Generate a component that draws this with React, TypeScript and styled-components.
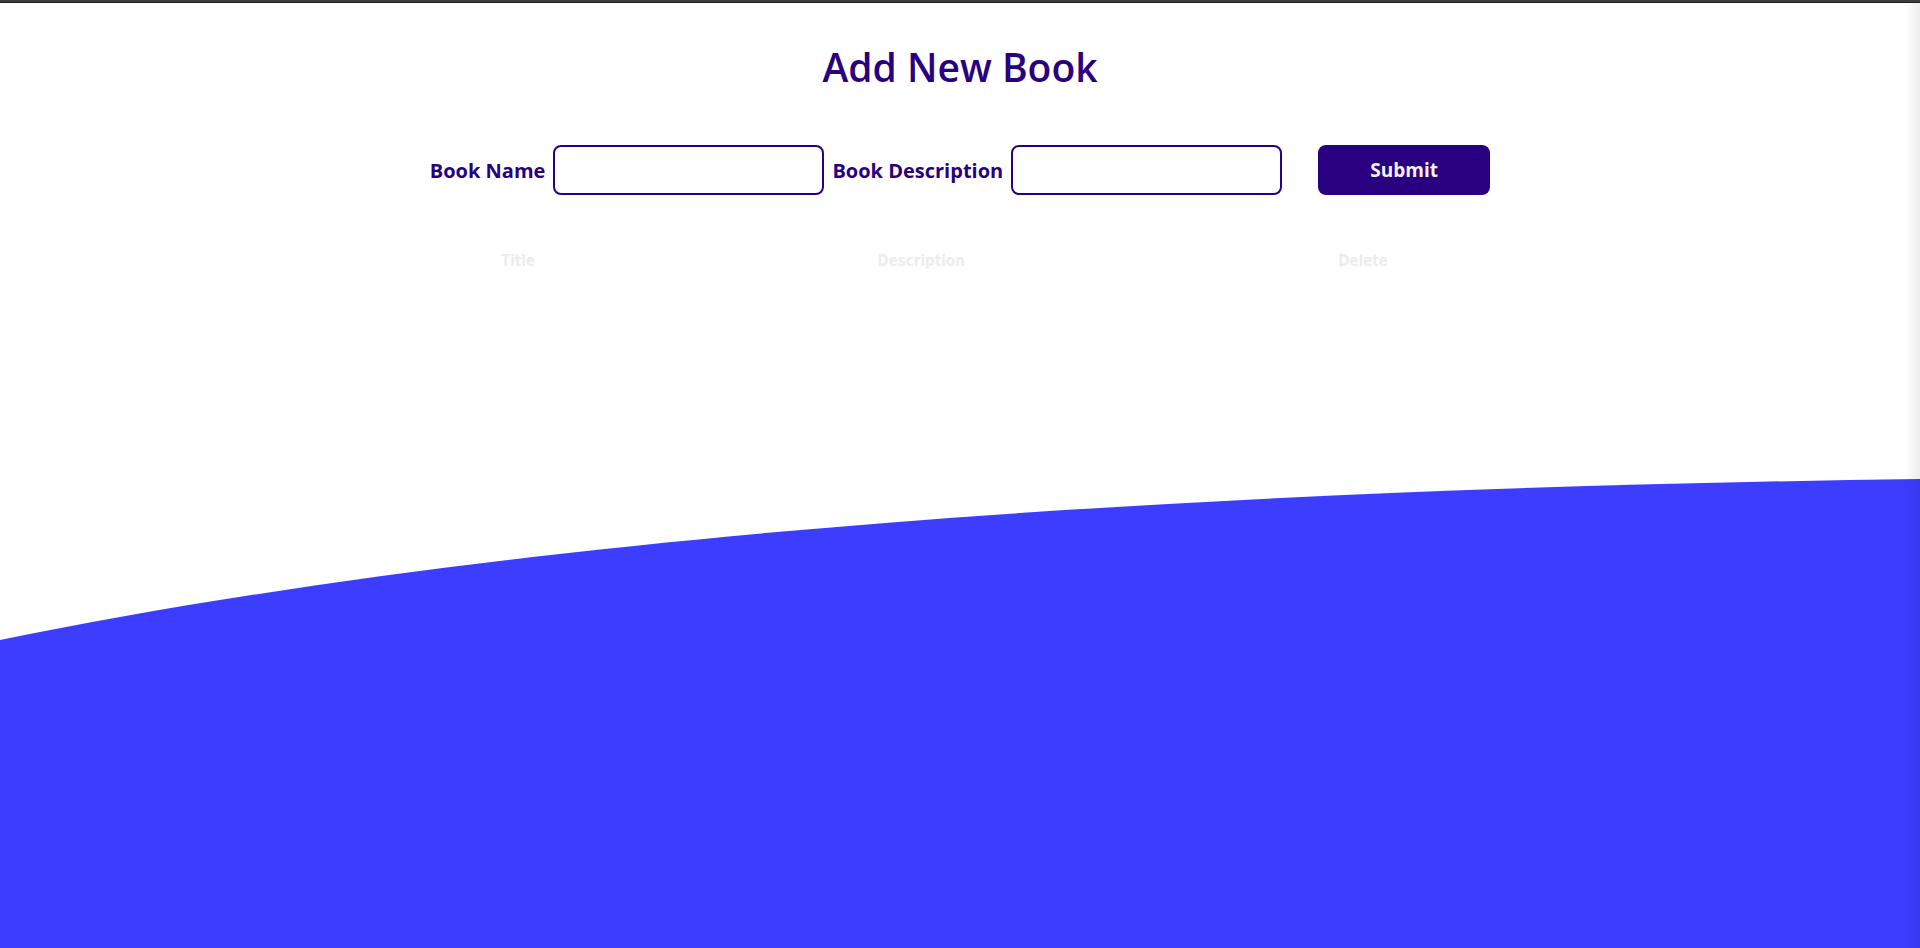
import React from "react";
import styled, { createGlobalStyle } from "styled-components";

const GlobalStyle = createGlobalStyle`
  html, body {
    margin: 0;
    padding: 0;
    background: #ffffff;
    height: 100%;
    overflow: hidden;
  }
  body {
    font-family: "Open Sans", "Noto Sans", sans-serif;
  }
  * { box-sizing: border-box; }
`;

const INDIGO = "#29007f";
const BLUE = "#3c3dff";

const Page = styled.div`
  position: relative;
  min-height: 948px;
  height: 100vh;
  display: flex;
  flex-direction: column;
  overflow: hidden;
`;

const TopBar = styled.div`
  height: 3px;
  flex: none;
  background: #3d3d3d;
  border-bottom: 1px solid #1f1f1f;
`;

const Main = styled.main`
  display: flex;
  flex-direction: column;
  align-items: center;
  padding-top: 44px;
`;

const Title = styled.h1`
  margin: 0;
  font-family: "Open Sans", "Noto Sans", sans-serif;
  font-weight: 600;
  font-size: 39px;
  line-height: 40px;
  color: ${INDIGO};
`;

const Form = styled.form`
  margin-top: 58px;
  display: flex;
  align-items: center;
  justify-content: center;
  width: 1062px;
`;

const Label = styled.label`
  font-family: "Open Sans", "Noto Sans", sans-serif;
  font-weight: 700;
  font-size: 20px;
  color: ${INDIGO};
  margin-right: 8px;
  white-space: nowrap;
`;

const Input = styled.input<{ $gap: number }>`
  width: 271px;
  height: 50px;
  border: 2px solid ${INDIGO};
  border-radius: 8px;
  background: #fff;
  margin-right: ${(p) => p.$gap}px;
  outline: none;
  font-size: 16px;
`;

const Button = styled.button`
  width: 172px;
  height: 50px;
  border: none;
  border-radius: 8px;
  background: ${INDIGO};
  color: #f4f2fa;
  font-family: "Open Sans", "Noto Sans", sans-serif;
  font-weight: 700;
  font-size: 19px;
  cursor: pointer;
`;

const Table = styled.table`
  margin-top: 56px;
  width: 1062px;
  border-collapse: collapse;
  table-layout: fixed;
`;

const Th = styled.th<{ $w: number }>`
  width: ${(p) => p.$w}px;
  font-family: "DejaVu Sans Condensed", "DejaVu Sans", sans-serif;
  font-stretch: condensed;
  font-weight: 700;
  font-size: 15px;
  line-height: 20px;
  color: #ececef;
  text-align: center;
  padding: 0;
`;

const Wave = styled.svg`
  display: block;
  margin-top: auto;
  width: 100%;
  height: 469px;
  flex: none;
`;

const EdgeShade = styled.div`
  position: absolute;
  top: 3px;
  right: 0;
  bottom: 0;
  width: 16px;
  background: linear-gradient(to right, rgba(0, 0, 0, 0), rgba(0, 0, 0, 0.07));
  pointer-events: none;
`;

export default function App() {
  return (
    <>
      <GlobalStyle />
      <Page>
        <TopBar />
        <Main>
          <Title>Add New Book</Title>
          <Form onSubmit={(e) => e.preventDefault()}>
            <Label htmlFor="bookName">Book Name</Label>
            <Input id="bookName" type="text" $gap={8} />
            <Label htmlFor="bookDesc">Book Description</Label>
            <Input id="bookDesc" type="text" $gap={36} />
            <Button type="submit">Submit</Button>
          </Form>
          <Table>
            <thead>
              <tr>
                <Th $w={178}>Title</Th>
                <Th $w={628}>Description</Th>
                <Th $w={256}>Delete</Th>
              </tr>
            </thead>
            <tbody />
          </Table>
        </Main>
        <Wave viewBox="0 0 1920 469" preserveAspectRatio="none" aria-hidden="true">
          <path d="M0,161 C520,55 1180,10 1920,0 L1920,469 L0,469 Z" fill={BLUE} />
        </Wave>
        <EdgeShade />
      </Page>
    </>
  );
}
